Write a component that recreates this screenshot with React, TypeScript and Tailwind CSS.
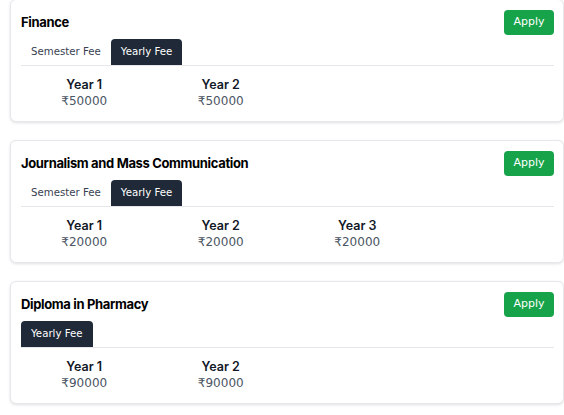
const courses = [
  { name: "Finance", tabs: ["Semester Fee", "Yearly Fee"], fees: ["₹50000", "₹50000"] },
  {
    name: "Journalism and Mass Communication",
    tabs: ["Semester Fee", "Yearly Fee"],
    fees: ["₹20000", "₹20000", "₹20000"],
  },
  { name: "Diploma in Pharmacy", tabs: ["Yearly Fee"], fees: ["₹90000", "₹90000"] },
];

function CourseCard({ name, tabs, fees }: { name: string; tabs: string[]; fees: string[] }) {
  return (
    <div className="h-[123px] w-[554px] shrink-0 rounded-md border border-gray-200 bg-white pl-[10px] pr-[9px] pt-[10px] shadow-[0_1px_3px_rgba(0,0,0,0.12)]">
      <div className="flex h-[25px] items-center justify-between">
        <span className="font-['Inter',sans-serif] text-[13px] font-bold tracking-[-0.35px] text-black">{name}</span>
        <button className="h-[25px] w-[50px] rounded-[4px] bg-[#16a34a] text-[11px] text-white">Apply</button>
      </div>
      <div className="mt-[4px] flex border-b border-gray-200">
        {tabs.map((t) => (
          <div
            key={t}
            className={
              t === "Yearly Fee"
                ? "flex h-[26px] items-center rounded-t-[4px] bg-[#1f2937] px-[10px] text-[10.2px] text-white"
                : "flex h-[26px] items-center px-[10px] text-[10.2px] text-[#374151]"
            }
          >
            {t}
          </div>
        ))}
      </div>
      <div className="-ml-[5px] mt-[10px] grid grid-cols-[repeat(4,136.5px)]">
        {fees.map((f, i) => (
          <div key={i} className="flex flex-col items-center">
            <span className="font-['Inter',sans-serif] text-[12.5px] leading-[17px] font-semibold text-[#111827]">
              Year {i + 1}
            </span>
            <span className="text-[12px] leading-[17px] text-[#4b5563]">{f}</span>
          </div>
        ))}
      </div>
    </div>
  );
}

export default function App() {
  return (
    <div
      className="flex h-[415px] flex-col gap-[18px] overflow-hidden bg-white pl-[10px] -mt-px"
      style={{ fontFamily: '"DejaVu Sans", sans-serif' }}
    >
      {courses.map((c) => (
        <CourseCard key={c.name} {...c} />
      ))}
    </div>
  );
}
